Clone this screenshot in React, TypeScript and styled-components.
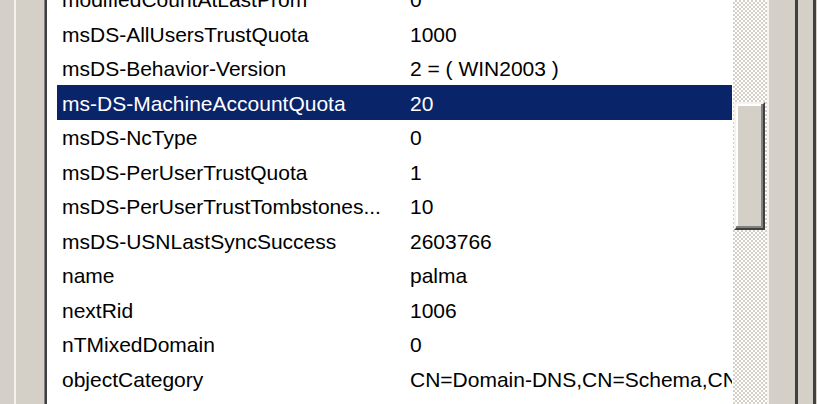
import React from 'react';
import styled, { createGlobalStyle } from 'styled-components';

const GlobalStyle = createGlobalStyle`
  html, body {
    margin: 0;
    padding: 0;
    background: #d4d0c8;
    overflow: hidden;
  }
`;

const Window = styled.div`
  display: flex;
  width: 817px;
  height: 404px;
  overflow: hidden;
  background: #d4d0c8;
  font-family: "Liberation Sans", Arial, sans-serif;
`;

const Strip = styled.div<{ $w: number; $edge?: string; $edgeW?: number }>`
  flex: 0 0 ${p => p.$w}px;
  border-right: ${p => (p.$edge ? `${p.$edgeW ?? 2}px solid ${p.$edge}` : 'none')};
`;

const ListBox = styled.div`
  display: flex;
  flex: 0 0 auto;
  border-left: 1px solid #808080;
  border-right: 2px solid #f4f3ee;
`;

const List = styled.div`
  width: 675px;
  padding: 0 1px 0 10px;
  background: #fff;
  border-left: 2px solid #404040;
  overflow: hidden;
`;

const Rows = styled.div`
  margin-top: -18.5px;
`;

const Row = styled.div<{ $selected?: boolean }>`
  display: grid;
  grid-template-columns: 348px 1fr;
  align-items: center;
  box-sizing: border-box;
  height: 34.5px;
  padding-top: 3px;
  font-size: 21px;
  background: ${p => (p.$selected ? '#0a246a' : 'transparent')};
  color: ${p => (p.$selected ? '#fff' : '#000')};
`;

const Cell = styled.div`
  padding-left: 5px;
  white-space: nowrap;
  overflow: hidden;
`;

const Track = styled.div`
  display: flex;
  flex-direction: column;
  width: 34px;
  padding-left: 1px;
  box-sizing: border-box;
  background-color: #fff;
  background-image: conic-gradient(#d4d0c8 25%, transparent 0 50%, #d4d0c8 0 75%, transparent 0);
  background-size: 4px 4px;
`;

const Thumb = styled.div`
  margin-top: 102px;
  width: 31px;
  height: 128px;
  box-sizing: border-box;
  background: #d4d0c8;
  border: 2px solid;
  border-color: #f4f3ee #404040 #404040 #f4f3ee;
  box-shadow: inset -2px -2px #808080, inset 2px 2px #fff;
`;

const attributes = [
  { name: 'modifiedCountAtLastProm', value: '0' },
  { name: 'msDS-AllUsersTrustQuota', value: '1000' },
  { name: 'msDS-Behavior-Version', value: '2 = ( WIN2003 )' },
  { name: 'ms-DS-MachineAccountQuota', value: '20', selected: true },
  { name: 'msDS-NcType', value: '0' },
  { name: 'msDS-PerUserTrustQuota', value: '1' },
  { name: 'msDS-PerUserTrustTombstones...', value: '10' },
  { name: 'msDS-USNLastSyncSuccess', value: '2603766' },
  { name: 'name', value: 'palma' },
  { name: 'nextRid', value: '1006' },
  { name: 'nTMixedDomain', value: '0' },
  { name: 'objectCategory', value: 'CN=Domain-DNS,CN=Schema,CN=Configuration,DC=palma,DC=local' },
];

const App = () => {
  return (
    <>
      <GlobalStyle />
      <Window>
        <Strip $w={14} $edge="#f4f3ee" />
        <Strip $w={28} />
        <ListBox>
          <List>
            <Rows>
              {attributes.map(item => (
                <Row key={item.name} $selected={item.selected}>
                  <Cell>{item.name}</Cell>
                  <Cell>{item.value}</Cell>
                </Row>
              ))}
            </Rows>
          </List>
          <Track>
            <Thumb />
          </Track>
        </ListBox>
        <Strip $w={26} $edge="#404040" $edgeW={3} />
        <Strip $w={15} $edge="#404040" $edgeW={3} />
        <Strip $w={2} />
      </Window>
    </>
  );
};

export default App;
